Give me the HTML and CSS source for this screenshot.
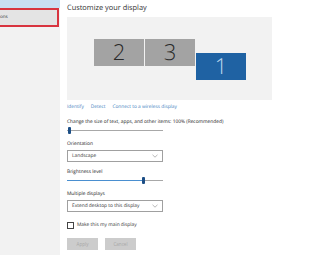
FILE: index.html
```html
<!DOCTYPE html>
<html>
<head>
    <meta charset="utf-8">
    <title>Display settings</title>
    <link rel="stylesheet" href="styles.css">
</head>
<body>
    <nav class="sidebar">
        <div class="side-top"></div>
        <div class="side-item">ons</div>
    </nav>

    <main class="content">
        <h1 class="title">Customize your display</h1>

        <div class="arrange">
            <div class="monitor mon2">2</div>
            <div class="monitor mon3">3</div>
            <div class="monitor mon1">1</div>
        </div>

        <div class="links">
            <a href="#">Identify</a>
            <a href="#">Detect</a>
            <a href="#">Connect to a wireless display</a>
        </div>

        <div class="label first">Change the size of text, apps, and other items: 100% (Recommended)</div>
        <div class="slider">
            <div class="track"></div>
            <div class="thumb scale-thumb"></div>
        </div>

        <div class="label">Orientation</div>
        <div class="select">
            <span>Landscape</span>
            <svg class="chev" width="6" height="4" viewBox="0 0 6 4"><path d="M0.5 0.8 L3 3.2 L5.5 0.8" fill="none" stroke="#888" stroke-width="0.6"/></svg>
        </div>

        <div class="label">Brightness level</div>
        <div class="slider">
            <div class="track"></div>
            <div class="fill"></div>
            <div class="thumb bright-thumb"></div>
        </div>

        <div class="label">Multiple displays</div>
        <div class="select">
            <span>Extend desktop to this display</span>
            <svg class="chev" width="6" height="4" viewBox="0 0 6 4"><path d="M0.5 0.8 L3 3.2 L5.5 0.8" fill="none" stroke="#888" stroke-width="0.6"/></svg>
        </div>

        <label class="check">
            <span class="box"></span>
            Make this my main display
        </label>

        <div class="buttons">
            <button>Apply</button>
            <button>Cancel</button>
        </div>
    </main>
</body>
</html>
```

FILE: styles.css
```css
body {
    margin: 0;
    width: 310px;
    height: 255px;
    overflow: hidden;
    display: flex;
    font-family: "Open Sans", "Liberation Sans", sans-serif;
    text-rendering: geometricPrecision;
    background-color: #fff;
    color: #222;
}
.sidebar {
    width: 60px;
    flex-shrink: 0;
    background-color: #f2f2f2;
}
.side-top {
    height: 8px;
    background-color: #c9def2;
}
.side-item {
    height: 15px;
    border: 2px solid #d8343f;
    border-left: none;
    background-color: #e4e4e4;
    font-size: 4.6px;
    line-height: 15px;
    color: #333;
    margin-right: 1px;
}
.content {
    flex: 1;
    padding-left: 7px;
    white-space: nowrap;
}
.title {
    margin: 0;
    height: 17px;
    font-size: 7.4px;
    font-weight: normal;
    line-height: 16px;
    color: #333;
}
.arrange {
    position: relative;
    width: 205px;
    height: 83px;
    background-color: #f2f2f2;
}
.monitor {
    position: absolute;
    width: 50px;
    height: 27px;
    background-color: #a3a3a3;
    color: #2a2a2a;
    font-size: 22px;
    font-weight: 300;
    text-align: center;
    line-height: 27px;
}
.mon2 {
    left: 27px;
    top: 22px;
}
.mon3 {
    left: 78px;
    top: 22px;
}
.mon1 {
    left: 129px;
    top: 36px;
    background-color: #1f62a3;
    color: #b9d6ee;
}
.links {
    margin-top: 4px;
    display: flex;
    gap: 7px;
    font-size: 4.8px;
    line-height: 7px;
}
.links a {
    color: #3f7fc0;
    text-decoration: none;
}
.label {
    margin-top: 6px;
    font-size: 4.85px;
    line-height: 8px;
    color: #222;
}
.label.first {
    margin-top: 7px;
}
.slider {
    position: relative;
    width: 96px;
    height: 8px;
}
.track {
    position: absolute;
    left: 0;
    right: 0;
    top: 4px;
    height: 1px;
    background-color: #a8a8a8;
}
.fill {
    position: absolute;
    left: 0;
    width: 76px;
    top: 4px;
    height: 1px;
    background-color: #4a8fd0;
}
.thumb {
    position: absolute;
    top: 1px;
    width: 3px;
    height: 7px;
    border-radius: 1px;
    background-color: #1d4f86;
}
.scale-thumb {
    left: 1px;
}
.bright-thumb {
    left: 75px;
}
.select {
    margin-top: 2px;
    height: 10px;
    border: 1px solid #a0a0a0;
    display: flex;
    align-items: center;
    justify-content: space-between;
    padding: 0 4px 0 4px;
    box-sizing: content-box;
    width: 86px;
    font-size: 4.85px;
    color: #333;
}
.check {
    margin-top: 9px;
    display: flex;
    align-items: center;
    gap: 3px;
    font-size: 4.85px;
    color: #333;
    height: 8px;
}
.box {
    width: 5px;
    height: 5px;
    border: 1px solid #444;
}
.buttons {
    margin-top: 9px;
    display: flex;
    gap: 7px;
}
button {
    width: 31px;
    height: 12px;
    border: none;
    padding: 0;
    background-color: #cccccc;
    color: #a8a8a8;
    font-family: inherit;
    font-size: 4.6px;
}
```
